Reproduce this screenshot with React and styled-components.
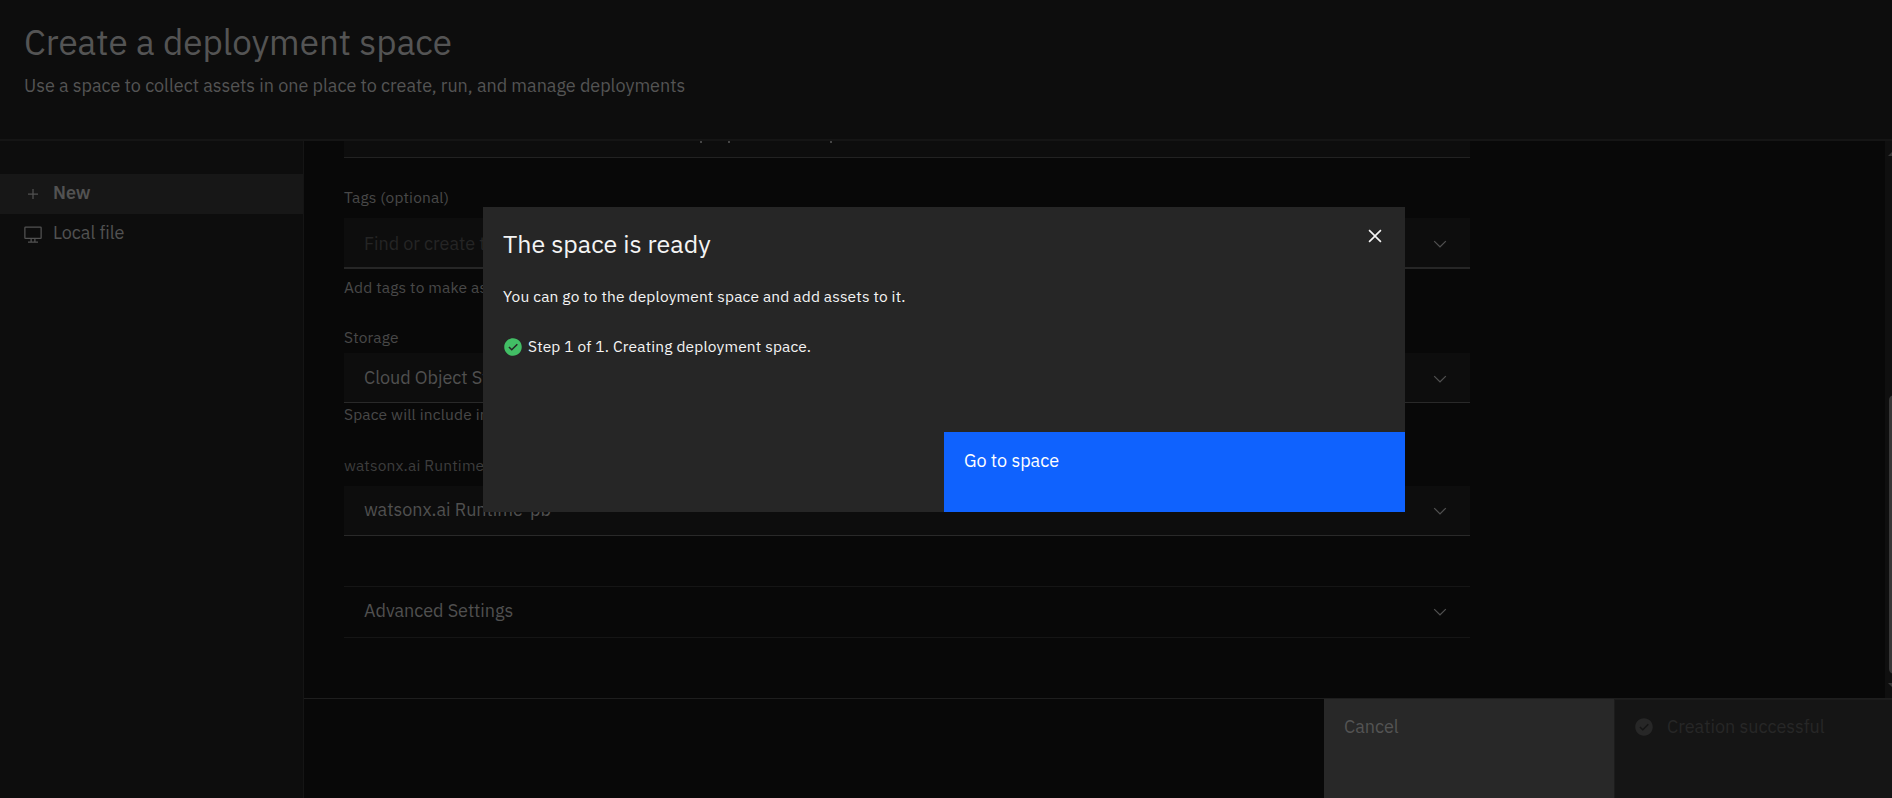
import React from "react";
import styled, { createGlobalStyle, css } from "styled-components";

const GlobalStyle = createGlobalStyle`
  * { box-sizing: border-box; }
  body {
    margin: 0;
    background: #080808;
    color: #545454;
    font-family: "IBM Plex Sans", Roboto, "Liberation Sans", sans-serif;
    overflow: hidden;
  }
  h1, h2, p { margin: 0; font-weight: 400; }
  button { font: inherit; border: 0; padding: 0; background: none; color: inherit; text-align: left; }
`;

const Page = styled.div`
  display: flex;
  flex-direction: column;
  width: 100%;
  height: 100vh;
  overflow: hidden;
`;

const Header = styled.header`
  height: 141px;
  padding: 22px 24px 0;
  background: #0d0d0d;
  border-bottom: 2px solid #151515;
`;

const Title = styled.h1`
  font-size: 35px;
  line-height: 40px;
`;

const Subtitle = styled.p`
  margin-top: 12px;
  font-size: 18px;
  line-height: 24px;
  letter-spacing: -0.02px;
`;

const Body = styled.div`
  flex: 1;
  display: flex;
  min-height: 0;
`;

const Sidebar = styled.nav`
  width: 304px;
  padding-top: 33px;
  background: #0d0d0d;
  border-right: 1px solid #151515;
`;

const NavItem = styled.button`
  display: flex;
  align-items: center;
  gap: 10px;
  width: 100%;
  height: 40px;
  padding-left: 23px;
  color: #525252;
  font-size: 18px;
  letter-spacing: -0.05px;
  font-weight: ${(p) => (p.$active ? 600 : 400)};
  background: ${(p) => (p.$active ? "#171717" : "transparent")};
`;

const NavLabel = styled.span`
  line-height: 24px;
  padding-bottom: 3px;
`;

const Content = styled.main`
  flex: 1;
  display: flex;
  flex-direction: column;
  min-width: 0;
`;

const ScrollArea = styled.section`
  flex: 1;
  display: flex;
  justify-content: space-between;
  min-height: 0;
  overflow: hidden;
`;

const Form = styled.div`
  width: 1126px;
  margin-left: 40px;
`;

const DescriptionEnd = styled.div`
  display: flex;
  height: 17px;
  padding-left: 356px;
  background: #0d0d0d;
  border-bottom: 1px solid #222;
`;

const Descender = styled.span`
  width: 2px;
  height: 2px;
  margin-right: ${(p) => p.$gap}px;
  background: #454545;
`;

const Field = styled.div`
  display: flex;
  flex-direction: column;
  margin-top: ${(p) => p.$top}px;
`;

const smallText = css`
  font-size: 15.5px;
  line-height: 20px;
  white-space: nowrap;
  letter-spacing: 0.16px;
`;

const Label = styled.label`
  ${smallText}
  margin-bottom: ${(p) => p.$gap}px;
  color: ${(p) => (p.$muted ? "#3d3d3d" : "#484848")};
`;

const Helper = styled.p`
  ${smallText}
  margin-top: ${(p) => p.$gap}px;
  color: #484848;
`;

const Select = styled.div`
  display: flex;
  align-items: center;
  justify-content: space-between;
  height: ${(p) => (p.$thick ? 51 : 50)}px;
  padding: ${(p) => p.$drop || 0}px 20px 0;
  background: #0d0d0d;
  border-bottom: ${(p) => (p.$thick ? "2px solid #262626" : "1px solid #292929")};
`;

const Value = styled.span`
  padding-bottom: ${(p) => p.$lift ?? 2}px;
  font-size: 18px;
  line-height: 24px;
  letter-spacing: -0.04px;
  color: ${(p) => (p.$placeholder ? "#252525" : "#505050")};
`;

const Accordion = styled.button`
  display: flex;
  align-items: center;
  justify-content: space-between;
  width: 100%;
  height: 52px;
  margin-top: 50px;
  padding: 0 20px;
  border-top: 1px solid #151515;
  border-bottom: 1px solid #151515;
`;

const ScrollTrack = styled.div`
  display: flex;
  flex-direction: column;
  width: 7px;
  padding: 11px 0 0 3px;
  background: #0f0f0f;
  overflow: hidden;
`;

const ScrollThumb = styled.div`
  width: 10px;
  height: 279px;
  margin: 239px 0 9px 1px;
  border-radius: 5px;
  background: #373737;
`;

const Footer = styled.footer`
  display: flex;
  justify-content: flex-end;
  height: 100px;
  border-top: 1px solid #1e1e1e;
`;

const CancelButton = styled.button`
  display: flex;
  align-items: flex-start;
  width: 290px;
  padding: 16px 20px;
  font-size: 18px;
  line-height: 24px;
  background: #282828;
  color: #545454;
`;

const DoneButton = styled.button`
  display: flex;
  align-items: flex-start;
  gap: 13px;
  width: 278px;
  padding: 15px 19px;
  font-size: 18px;
  line-height: 24px;
  color: #272727;
  background: #151515;
  border-top: 1px solid #1c1c1c;
  border-left: 1px solid #1c1c1c;
`;

const DoneIcon = styled.span`
  display: flex;
  padding-top: 2px;
`;

const Modal = styled.div`
  position: absolute;
  top: 207px;
  left: calc(50% - 463px);
  display: flex;
  flex-direction: column;
  width: 922px;
  height: 305px;
  background: #262626;
  color: #f4f4f4;
`;

const ModalHead = styled.div`
  display: flex;
  justify-content: space-between;
  align-items: flex-start;
  padding: 16px 17.5px 0 20px;
`;

const ModalTitle = styled.h2`
  margin-top: 5px;
  font-size: 25px;
  line-height: 32px;
`;

const CloseButton = styled.button`
  display: flex;
`;

const ModalBody = styled.div`
  flex: 1;
  display: flex;
  flex-direction: column;
  gap: 30px;
  padding: 26px 20px 0;
`;

const ModalText = styled.p`
  ${smallText}
`;

const Step = styled.div`
  display: flex;
  align-items: center;
  gap: 5px;
  color: #42be65;
`;

const StepText = styled(ModalText)`
  margin-bottom: 2px;
  color: #f4f4f4;
`;

const PrimaryButton = styled.button`
  align-self: flex-end;
  display: flex;
  align-items: flex-start;
  width: 50%;
  height: 80px;
  padding: 17px 20px;
  font-size: 18px;
  line-height: 24px;
  color: #fff;
  background: #0f62fe;
`;

const Icon = styled.svg`
  display: block;
  flex: none;
  fill: ${(p) => p.$color || "currentColor"};
`;

const Chevron = () => (
  <Icon width="20" height="20" viewBox="0 0 16 16" $color="#505050">
    <path d="M8 11L3 6 3.7 5.3 8 9.6 12.3 5.3 13 6z" />
  </Icon>
);

const Plus = () => (
  <Icon width="20" height="20" viewBox="0 0 32 32">
    <path d="M17 15V8h-2v7H8v2h7v7h2v-7h7v-2z" />
  </Icon>
);

const Screen = () => (
  <Icon width="20" height="20" viewBox="0 0 32 32">
    <path d="M28 4H4A2 2 0 0 0 2 6V22a2 2 0 0 0 2 2h8v4H8v2H24V28H20V24h8a2 2 0 0 0 2-2V6A2 2 0 0 0 28 4ZM18 28H14V24h4Zm10-6H4V6H28Z" />
  </Icon>
);

const Close = () => (
  <Icon width="26" height="26" viewBox="0 0 32 32">
    <path d="M17.4141 16L24 9.4141 22.5859 8 16 14.5859 9.4143 8 8 9.4141 14.5859 16 8 22.5859 9.4143 24 16 17.4141 22.5859 24 24 22.5859z" />
  </Icon>
);

const CheckFilled = () => (
  <Icon width="20" height="20" viewBox="0 0 16 16">
    <path d="M8,1C4.1,1,1,4.1,1,8c0,3.9,3.1,7,7,7s7-3.1,7-7C15,4.1,11.9,1,8,1z M7,11L4.3,8.3l0.9-0.8L7,9.3l4-3.9l0.9,0.8L7,11z" />
  </Icon>
);

export default function App() {
  return (
    <Page>
      <GlobalStyle />
      <Header>
        <Title>Create a deployment space</Title>
        <Subtitle>
          Use a space to collect assets in one place to create, run, and manage deployments
        </Subtitle>
      </Header>
      <Body>
        <Sidebar>
          <NavItem $active>
            <Plus />
            <NavLabel>New</NavLabel>
          </NavItem>
          <NavItem>
            <Screen />
            <NavLabel>Local file</NavLabel>
          </NavItem>
        </Sidebar>
        <Content>
          <ScrollArea>
            <Form>
              <DescriptionEnd>
                <Descender $gap={26} />
                <Descender $gap={100} />
                <Descender $gap={0} />
              </DescriptionEnd>
              <Field $top={29}>
                <Label $gap={11}>Tags (optional)</Label>
                <Select $thick $drop={3}>
                  <Value $placeholder $lift={1}>Find or create tags</Value>
                  <Chevron />
                </Select>
                <Helper $gap={8}>Add tags to make assets easier to find.</Helper>
              </Field>
              <Field $top={30}>
                <Label $gap={6}>Storage</Label>
                <Select $drop={2}>
                  <Value>Cloud Object Storage</Value>
                  <Chevron />
                </Select>
                <Helper $gap={1}>Space will include integration</Helper>
              </Field>
              <Field $top={31}>
                <Label $gap={11} $muted>watsonx.ai Runtime</Label>
                <Select $drop={1}>
                  <Value>watsonx.ai Runtime-pb</Value>
                  <Chevron />
                </Select>
              </Field>
              <Accordion>
                <Value $lift={3}>Advanced Settings</Value>
                <Chevron />
              </Accordion>
            </Form>
            <ScrollTrack>
              <Icon width="4" height="4" viewBox="0 0 4 4" $color="#373737">
                <path d="M0 4L4 0V4z" />
              </Icon>
              <ScrollThumb />
              <Icon width="4" height="4" viewBox="0 0 4 4" $color="#373737">
                <path d="M0 0H4V4z" />
              </Icon>
            </ScrollTrack>
          </ScrollArea>
          <Footer>
            <CancelButton>Cancel</CancelButton>
            <DoneButton>
              <DoneIcon><CheckFilled /></DoneIcon>
              Creation successful
            </DoneButton>
          </Footer>
        </Content>
      </Body>
      <Modal role="dialog">
        <ModalHead>
          <ModalTitle>The space is ready</ModalTitle>
          <CloseButton aria-label="Close"><Close /></CloseButton>
        </ModalHead>
        <ModalBody>
          <ModalText>You can go to the deployment space and add assets to it.</ModalText>
          <Step>
            <CheckFilled />
            <StepText>Step 1 of 1. Creating deployment space.</StepText>
          </Step>
        </ModalBody>
        <PrimaryButton>Go to space</PrimaryButton>
      </Modal>
    </Page>
  );
}
